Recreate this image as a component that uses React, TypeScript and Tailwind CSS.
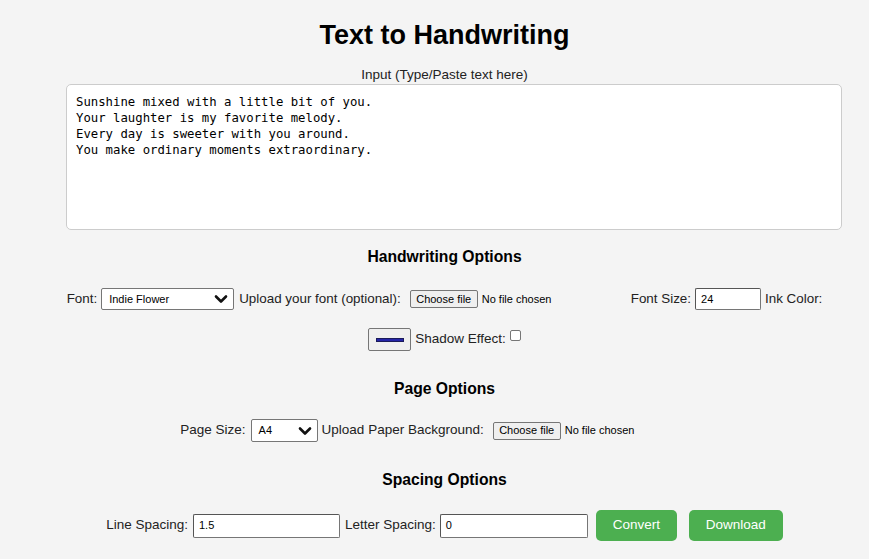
import React from "react";

function Chevron() {
  return (
    <svg width="14" height="10" viewBox="0 0 14 10" className="shrink-0">
      <path d="M2 2.5 L7 7.5 L12 2.5" fill="none" stroke="#111" strokeWidth="2.6" strokeLinecap="round" strokeLinejoin="round" />
    </svg>
  );
}

function Select({ value, w, h }: { value: string; w: string; h: string }) {
  return (
    <div className={`${w} ${h} shrink-0 flex items-center justify-between bg-white border border-[#767676] rounded-[2px] pl-[7px] pr-[5px] text-[11px] text-black`}>
      <span>{value}</span>
      <Chevron />
    </div>
  );
}

function FileInput() {
  return (
    <div className="w-[216px] shrink-0 flex items-center whitespace-nowrap">
      <div className="w-[68px] h-[18px] shrink-0 flex items-center justify-center bg-[#efefef] border border-[#767676] rounded-[2px] text-[11px] text-black">
        Choose file
      </div>
      <span className="ml-[4px] text-[11px] text-black">No file chosen</span>
    </div>
  );
}

function TextInput({ value, w, h }: { value: string; w: string; h: string }) {
  return (
    <div className={`${w} ${h} shrink-0 flex items-center bg-white border border-[#767676] border-t-[#555] border-l-[#555] rounded-[2px] pl-[5px] text-[11px] text-black`}>
      {value}
    </div>
  );
}

export default function App() {
  return (
    <div className="min-h-screen bg-[#f4f4f4] font-['Liberation_Sans',Arial,sans-serif] text-[#222]">
      <div className="ml-[66px] w-[757px] flex flex-col items-center">
        <h1 className="mt-[19px] text-[27px] leading-[32px] font-bold text-black">Text to Handwriting</h1>
        <label className="mt-[16px] text-[13.5px] leading-[16px]">Input (Type/Paste text here)</label>
        <div className="mt-px self-start w-[776px] h-[146px] bg-white border border-[#cccccc] rounded-[5px] px-[9px] py-[9px] font-['DejaVu_Sans_Mono',monospace] text-[12.3px] leading-[16px] text-black">
          <div>Sunshine mixed with a little bit of you.</div>
          <div>Your laughter is my favorite melody.</div>
          <div>Every day is sweeter with you around.</div>
          <div>You make ordinary moments extraordinary.</div>
        </div>

        <h3 className="mt-[18px] text-[15.7px] leading-[18px] font-bold text-black">Handwriting Options</h3>
        <div className="mt-[22px] h-[22px] flex items-center text-[13.4px] whitespace-nowrap">
          <span>Font:</span>
          <div className="ml-[4px]">
            <Select value="Indie Flower" w="w-[133px]" h="h-[22px]" />
          </div>
          <span className="ml-[5px]">Upload your font (optional):</span>
          <div className="ml-[9px]">
            <FileInput />
          </div>
          <span className="ml-[5px]">Font Size:</span>
          <div className="ml-[4px]">
            <TextInput value="24" w="w-[66px]" h="h-[22px]" />
          </div>
          <span className="ml-[4px]">Ink Color:</span>
        </div>
        <div className="mt-[18px] h-[23px] flex items-center text-[13.5px] whitespace-nowrap">
          <div className="w-[43px] h-[23px] shrink-0 flex items-center justify-center bg-[#efefef] border border-[#767676] rounded-[2px]">
            <div className="w-[28px] h-[4px] bg-[#2424a8] border border-[#1a1a5a]" />
          </div>
          <span className="ml-[4px]">Shadow Effect:</span>
          <div className="ml-[4px] -mt-[8px] w-[11px] h-[11px] shrink-0 bg-white border border-[#767676] rounded-[2px]" />
        </div>

        <h3 className="mt-[29px] text-[15.7px] leading-[18px] font-bold text-black">Page Options</h3>
        <div className="mt-[21px] h-[23px] flex items-center text-[13.5px] whitespace-nowrap">
          <span>Page Size:</span>
          <div className="ml-[5px]">
            <Select value="A4" w="w-[67px]" h="h-[23px]" />
          </div>
          <span className="ml-[4px]">Upload Paper Background:</span>
          <div className="ml-[9px]">
            <FileInput />
          </div>
        </div>

        <h3 className="mt-[29px] text-[15.7px] leading-[18px] font-bold text-black">Spacing Options</h3>
        <div className="mt-[21px] h-[31px] flex items-center text-[13.5px] whitespace-nowrap">
          <span>Line Spacing:</span>
          <div className="ml-[5px]">
            <TextInput value="1.5" w="w-[147px]" h="h-[24px]" />
          </div>
          <span className="ml-[5px]">Letter Spacing:</span>
          <div className="ml-[4px]">
            <TextInput value="0" w="w-[148px]" h="h-[24px]" />
          </div>
          <button className="ml-[8px] w-[81px] h-[31px] shrink-0 rounded-[5px] bg-[#4caf50] text-white text-[13.5px]">Convert</button>
          <button className="ml-[12px] w-[94px] h-[31px] shrink-0 rounded-[5px] bg-[#4caf50] text-white text-[13.5px]">Download</button>
        </div>
      </div>
    </div>
  );
}
